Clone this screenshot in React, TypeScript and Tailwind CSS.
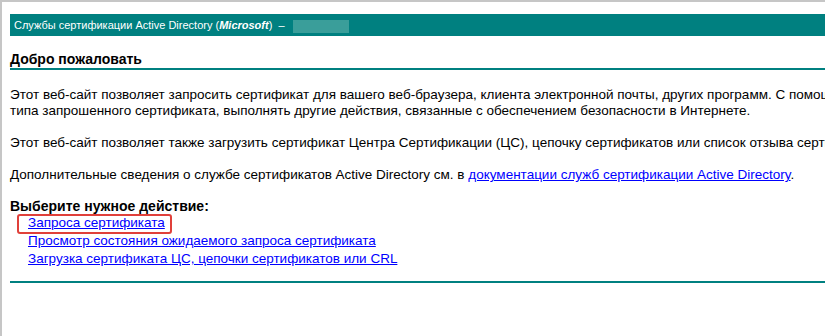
import React from 'react';

const links = [
  'Запроса сертификата',
  'Просмотр состояния ожидаемого запроса сертификата',
  'Загрузка сертификата ЦС, цепочки сертификатов или CRL',
];

export default function App() {
  return (
    <div className="h-[336px] overflow-hidden border-t-2 border-l-2 border-[#c6c6c6] bg-white font-['Liberation_Sans',Arial,sans-serif] text-black">
      <div className="pl-2 pt-3 whitespace-nowrap">
        <div className="h-[22px] bg-[#008080] text-white text-[11px] flex items-center pl-1">
          <span>
            Службы сертификации Active Directory (<b><i>Microsoft</i></b>) &nbsp;–&nbsp;
          </span>
          <span className="ml-[5px] mt-[2px] inline-block w-[56px] h-[13px] bg-[#3a9e9a]" />
        </div>

        <h1 className="mt-[14px] text-[14px] leading-[18px] font-bold border-b-2 border-[#008080]">
          Добро пожаловать
        </h1>

        <div className="mt-[17px] text-[13.5px] leading-4 space-y-4">
          <p>
            Этот веб-сайт позволяет запросить сертификат для вашего веб-браузера, клиента электронной почты, других программ. С помощью сертификата можно подтвердить свою личность другим пользователям при обмене данными через Интернет, подписывать и шифровать сообщения, а также, в зависимости от
            <br />
            типа запрошенного сертификата, выполнять другие действия, связанные с обеспечением безопасности в Интернете.
          </p>
          <p>
            Этот веб-сайт позволяет также загрузить сертификат Центра Сертификации (ЦС), цепочку сертификатов или список отзыва сертификатов (CRL), а также просмотреть состояние ожидаемого запроса.
          </p>
          <p>
            Дополнительные сведения о службе сертификатов Active Directory см. в{' '}
            <a href="#" className="text-[#0000ff] underline">документации служб сертификации Active Directory</a>.
          </p>
          <div>
            <p className="text-[14px] leading-[15px] font-bold">Выберите нужное действие:</p>
            <ul className="pl-[18px] leading-[18px]">
              {links.map((l, i) => (
                <li key={l}>
                  <a href="#" className="relative text-[#0000ff] underline">
                    {l}
                    {i === 0 && (
                      <span className="absolute -left-[11px] -right-[7px] -top-[1px] -bottom-[4px] rounded-[3px] border-2 border-[#e0403a]" />
                    )}
                  </a>
                </li>
              ))}
            </ul>
          </div>
        </div>

        <hr className="mt-[13px] border-0 h-[2px] bg-[#008080]" />
      </div>
    </div>
  );
}
